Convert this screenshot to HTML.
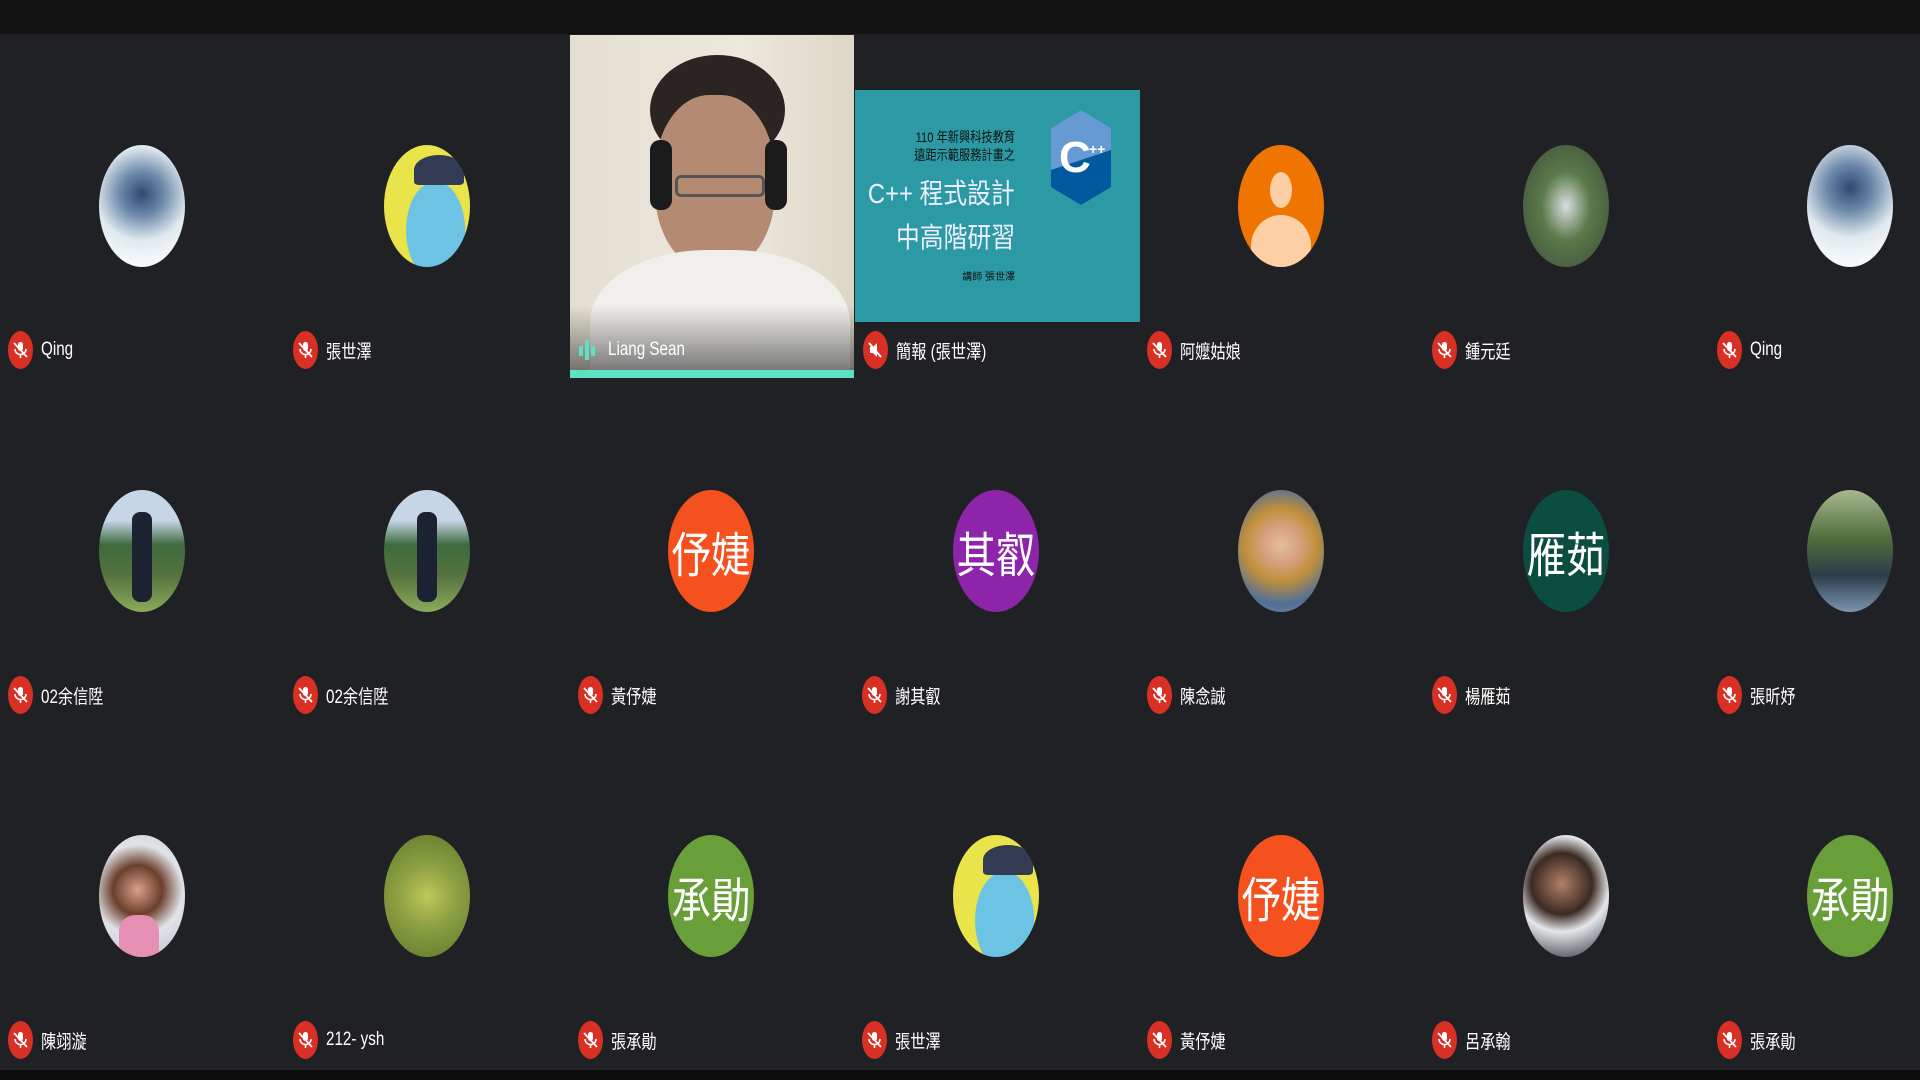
<!DOCTYPE html>
<html><head><meta charset="utf-8"><style>
*{margin:0;padding:0;box-sizing:border-box}
body{width:1920px;height:1080px;background:#202124;position:relative;overflow:hidden;font-family:"Liberation Sans","Noto Sans CJK TC",sans-serif}
.top{position:absolute;left:0;top:0;width:1920px;height:34px;background:#121212}
.bot{position:absolute;left:0;top:1070px;width:1920px;height:10px;background:#0d0d0d}
.av{position:absolute;width:86px;height:122px;border-radius:50%;overflow:hidden;display:flex;align-items:center;justify-content:center;color:#fff}
.av span{font-size:48px;transform:scaleX(.82);white-space:nowrap;font-family:"Noto Sans CJK TC",sans-serif}
.lb{position:absolute;height:40px;display:flex;align-items:center;color:#fff;font-size:19px}
.mic{width:25px;height:38px;border-radius:50%;background:#d93025;position:relative;margin-right:8px;flex:none}
.mic svg{position:absolute;left:5px;top:11px}
.lb span{display:inline-block;transform:scaleX(.8);transform-origin:left center;white-space:nowrap}
.sl{position:absolute;white-space:nowrap;text-align:right;transform-origin:right center}
</style></head><body>
<div class="top"></div>

<!-- video tile -->
<div style="position:absolute;left:570px;top:35px;width:284px;height:343px;background:linear-gradient(90deg,#e4dfd2,#ece8dc 60%,#ddd6c6);overflow:hidden">
  <div style="position:absolute;left:80px;top:20px;width:135px;height:110px;border-radius:50%;background:#2a2523"></div>
  <div style="position:absolute;left:85px;top:60px;width:120px;height:175px;border-radius:45%;background:#b58a72"></div>
  <div style="position:absolute;left:80px;top:105px;width:22px;height:70px;border-radius:10px;background:#1b1b1b"></div>
  <div style="position:absolute;left:195px;top:105px;width:22px;height:70px;border-radius:10px;background:#1b1b1b"></div>
  <div style="position:absolute;left:105px;top:140px;width:90px;height:22px;border:3px solid #555;border-radius:6px"></div>
  <div style="position:absolute;left:20px;top:215px;width:260px;height:160px;border-radius:45% 45% 0 0;background:#f1efec"></div>
  <div style="position:absolute;left:0;top:270px;width:284px;height:73px;background:linear-gradient(180deg,rgba(0,0,0,0),rgba(0,0,0,.55))"></div>
  <div style="position:absolute;left:0;top:335px;width:284px;height:8px;background:#5fe0c4"></div>
  <div class="lb" style="left:8px;top:295px"><svg width="18" height="24" viewBox="0 0 18 24" style="margin-right:12px"><rect x="1" y="8" width="4" height="10" fill="#5fe0c4"/><rect x="7" y="2" width="4" height="20" fill="#5fe0c4"/><rect x="13" y="8" width="4" height="10" fill="#5fe0c4"/></svg><span>Liang Sean</span></div>
</div>

<!-- slide tile -->
<div style="position:absolute;left:855px;top:35px;width:285px;height:343px;background:#202124">
  <div style="position:absolute;left:0;top:55px;width:285px;height:232px;background:#2c9aa5;color:#fff">
    <div class="sl" style="right:125px;top:38px;font-size:14px;line-height:18px;color:#111;transform:scaleX(.8)">110 年新興科技教育<br>遠距示範服務計畫之</div>
    <div class="sl" style="right:125px;top:82px;font-size:28px;color:#eef;transform:scaleX(.85)">C++ 程式設計</div>
    <div class="sl" style="right:125px;top:126px;font-size:28px;color:#eef;transform:scaleX(.85)">中高階研習</div>
    <div class="sl" style="right:125px;top:178px;font-size:10px;color:#111">講師 張世澤</div>
    <svg style="position:absolute;left:196px;top:20px" width="60" height="95" viewBox="0 0 60 95"><polygon points="30,0 60,18 60,77 30,95 0,77 0,18" fill="#00599c"/><polygon points="30,0 60,18 60,40 0,60 0,18" fill="#659ad2"/><text x="8" y="62" font-size="44" font-weight="bold" fill="#fff" font-family="Liberation Sans">C</text><text x="38" y="44" font-size="14" font-weight="bold" fill="#fff" font-family="Liberation Sans">++</text></svg>
  </div>
  <div class="lb" style="left:8px;top:295px"><div class="mic"><svg width="14" height="16" viewBox="0 0 14 16"><path d="M2 5h3l4-4v14l-4-4H2z" fill="#fff"/><path d="M1 1l12 14" stroke="#fff" stroke-width="2"/></svg></div><span>簡報 (張世澤)</span></div>
</div>

<!-- Row 1 avatars -->
<div class="av" style="left:99px;top:145px;background:radial-gradient(circle at 50% 40%,#2f4a73 0,#6a86a8 25%,#dfe9ef 55%,#f6f8f9 80%)"></div>
<div class="av" style="left:384px;top:145px;background:radial-gradient(ellipse at 60% 70%,#6dc3e3 0,#6dc3e3 40%,#e8e44a 41%,#e8e44a 100%)"><div style="position:absolute;left:30px;top:10px;width:50px;height:30px;border-radius:50% 50% 10% 10%;background:#333a54"></div></div>
<div class="av" style="left:1238px;top:145px;background:#ef7400"><div style="position:absolute;left:32px;top:27px;width:22px;height:36px;border-radius:50%;background:#fcd0a4"></div><div style="position:absolute;left:13px;top:70px;width:60px;height:62px;border-radius:50%;background:#fcd0a4"></div></div>
<div class="av" style="left:1523px;top:145px;background:radial-gradient(ellipse at 50% 50%,#d9dde0 0,#5b7a4a 40%,#3b4a3a 100%)"></div>
<div class="av" style="left:1807px;top:145px;background:radial-gradient(circle at 50% 35%,#2f4a73 0,#6a86a8 25%,#dfe9ef 55%,#f6f8f9 80%)"></div>

<!-- Row 2 -->
<div class="av" style="left:99px;top:490px;background:linear-gradient(180deg,#c6d6e6 0,#c6d6e6 25%,#3d6a3e 45%,#55733f 70%,#8bab5b 100%)"><div style="position:absolute;left:33px;top:22px;width:20px;height:90px;background:#1d2233;border-radius:8px"></div></div>
<div class="av" style="left:384px;top:490px;background:linear-gradient(180deg,#c6d6e6 0,#c6d6e6 25%,#3d6a3e 45%,#55733f 70%,#8bab5b 100%)"><div style="position:absolute;left:33px;top:22px;width:20px;height:90px;background:#1d2233;border-radius:8px"></div></div>
<div class="av" style="left:668px;top:490px;background:#f4511e"><span>伃婕</span></div>
<div class="av" style="left:953px;top:490px;background:#8e24aa"><span>其叡</span></div>
<div class="av" style="left:1238px;top:490px;background:radial-gradient(circle at 50% 45%,#e6bd9d 0,#d49f7b 25%,#c2903a 45%,#4e6e9a 75%,#8a8f9a 100%)"></div>
<div class="av" style="left:1523px;top:490px;background:#0b4d3f"><span>雁茹</span></div>
<div class="av" style="left:1807px;top:490px;background:linear-gradient(180deg,#a8b890 0,#4e6d3b 40%,#2c3d48 70%,#7b95b0 100%)"></div>

<!-- Row 3 -->
<div class="av" style="left:99px;top:835px;background:radial-gradient(circle at 45% 45%,#d9a08a 0,#6b3f2c 30%,#e1e3e8 55%,#b9bfc8 100%)"><div style="position:absolute;left:20px;top:80px;width:40px;height:42px;background:#e58fb2;border-radius:40% 40% 0 0"></div></div>
<div class="av" style="left:384px;top:835px;background:radial-gradient(circle at 50% 50%,#c0c85a 0,#8da043 40%,#5e7a2c 100%)"></div>
<div class="av" style="left:668px;top:835px;background:#689f38"><span>承勛</span></div>
<div class="av" style="left:953px;top:835px;background:radial-gradient(ellipse at 60% 70%,#6dc3e3 0,#6dc3e3 40%,#e8e44a 41%,#e8e44a 100%)"><div style="position:absolute;left:30px;top:10px;width:50px;height:30px;border-radius:50% 50% 10% 10%;background:#333a54"></div></div>
<div class="av" style="left:1238px;top:835px;background:#f4511e"><span>伃婕</span></div>
<div class="av" style="left:1523px;top:835px;background:radial-gradient(circle at 45% 40%,#b38066 0,#3b2a24 35%,#e5e7ea 55%,#4a4f58 90%)"></div>
<div class="av" style="left:1807px;top:835px;background:#689f38"><span>承勛</span></div>

<!-- labels -->
<div id="labels"></div>
<script>
var mic='<div class="mic"><svg width="15" height="16" viewBox="0 0 15 16"><rect x="5" y="0" width="5" height="9" rx="2.5" fill="#fff"/><path d="M2 7a5.5 5.5 0 0 0 11 0M7.5 12v4" stroke="#fff" stroke-width="1.6" fill="none"/><path d="M1 1l13 14" stroke="#fff" stroke-width="1.8"/></svg></div>';
var rows=[[330,["Qing","張世澤",null,null,"阿嬤姑娘","鍾元廷","Qing"]],[675,["02余信陞","02余信陞","黃伃婕","謝其叡","陳念誠","楊雁茹","張昕妤"]],[1020,["陳翊漩","212- ysh","張承勛","張世澤","黃伃婕","呂承翰","張承勛"]]];
var h='';
rows.forEach(function(r){r[1].forEach(function(n,i){if(n===null)return;var x=Math.round(i*284.8)+8;h+='<div class="lb" style="left:'+x+'px;top:'+r[0]+'px">'+mic+'<span>'+n+'</span></div>';});});
document.getElementById('labels').innerHTML=h;
</script>
<div class="bot"></div>
</body></html>
